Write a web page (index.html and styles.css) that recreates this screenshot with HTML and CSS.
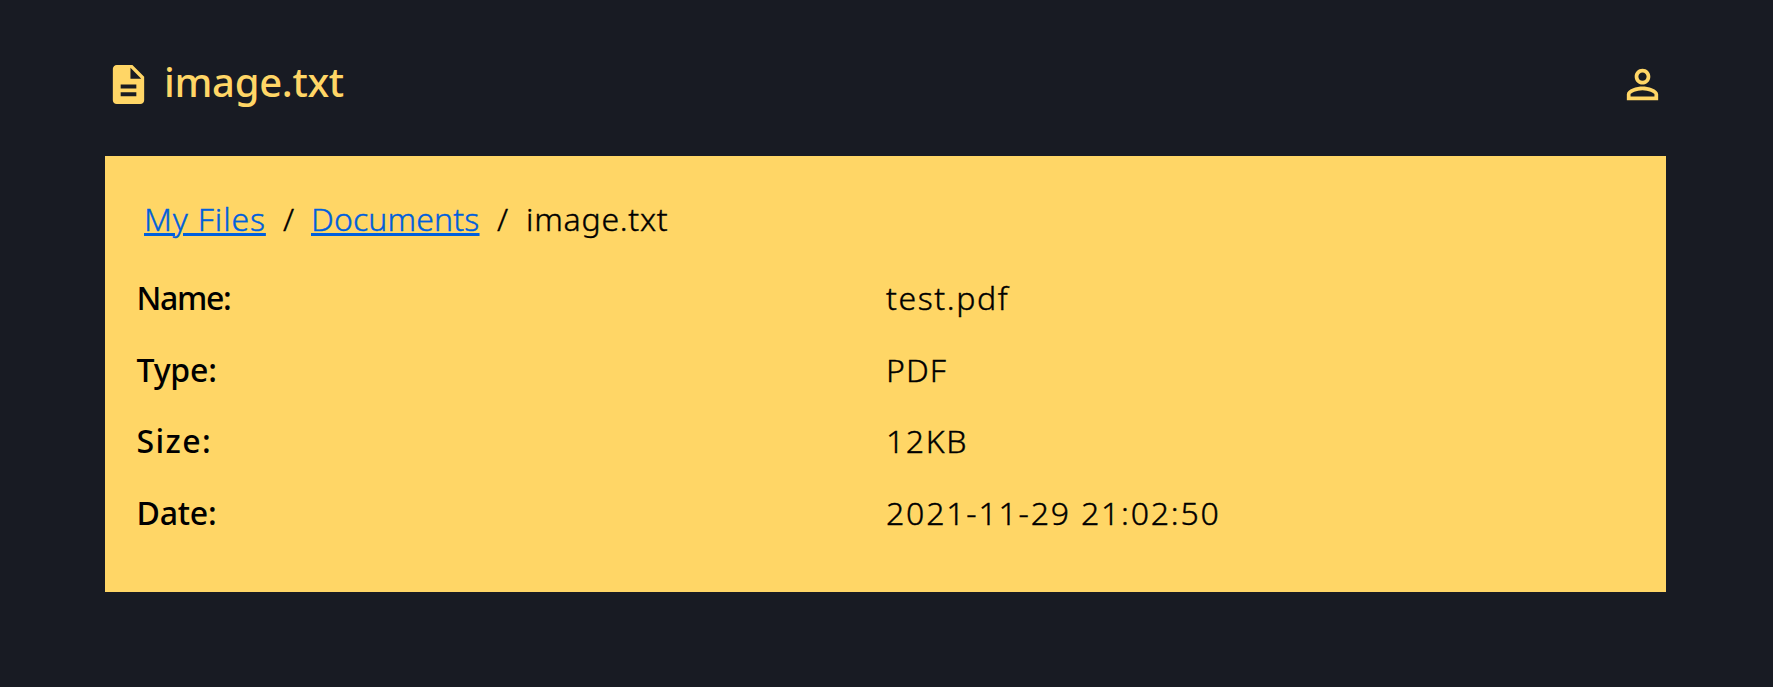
FILE: index.html
```html
<!DOCTYPE html>
<html lang="en">
<head>
<meta charset="utf-8">
<title>image.txt</title>
<link rel="stylesheet" href="styles.css">
</head>
<body>
<main class="page">
  <header class="header">
    <svg class="icon" viewBox="0 0 24 24"><path d="M14 2H6c-1.1 0-1.99.9-1.99 2L4 20c0 1.1.89 2 1.99 2H18c1.1 0 2-.9 2-2V8l-6-6zm2 16H8v-2h8v2zm0-4H8v-2h8v2zm-3-5V3.5L18.5 9H13z"/></svg>
    <h1 class="title">image.txt</h1>
    <svg class="icon" viewBox="0 0 24 24"><path d="M12 5.9c1.16 0 2.1.94 2.1 2.1s-.94 2.1-2.1 2.1S9.9 9.16 9.9 8s.94-2.1 2.1-2.1m0 9c2.97 0 6.1 1.46 6.1 2.1v1.1H5.9V17c0-.64 3.13-2.1 6.1-2.1M12 4C9.79 4 8 5.79 8 8s1.79 4 4 4 4-1.79 4-4-1.79-4-4-4zm0 9c-2.67 0-8 1.34-8 4v3h16v-3c0-2.66-5.33-4-8-4z"/></svg>
  </header>
  <section class="panel">
    <nav class="crumbs">
      <a class="crumb crumb-root" href="#">My Files</a>
      <span class="slash">/</span>
      <a class="crumb crumb-folder" href="#">Documents</a>
      <span class="slash">/</span>
      <span class="crumb-current">image.txt</span>
    </nav>
    <dl class="details">
      <dt class="label-name">Name:</dt><dd class="name">test.pdf</dd>
      <dt class="label-type">Type:</dt><dd class="type">PDF</dd>
      <dt class="label-size">Size:</dt><dd class="size">12KB</dd>
      <dt class="label-date">Date:</dt><dd class="date">2021-11-29 21:02:50</dd>
    </dl>
  </section>
</main>
</body>
</html>
```
FILE: styles.css
```css
body {
  margin: 0;
  background: #181b23;
  color: #000;
  font: 300 32px "Noto Sans", sans-serif;
}
.page { padding: 61px 107px 0 105px; }
.header {
  display: flex;
  height: 95px;
  color: #ffd666;
}
.icon {
  width: 47px;
  height: 47px;
  fill: currentColor;
}
.title {
  flex: 1;
  margin: 0 0 0 12px;
  font-size: 40px;
  font-weight: 500;
  line-height: 42px;
  letter-spacing: -0.3px;
}
.panel {
  box-sizing: border-box;
  height: 436px;
  padding: 31px 32px 0;
  background: #ffd666;
}
.crumbs {
  display: flex;
  height: 76px;
  padding-left: 7px;
  line-height: 64px;
  -webkit-text-stroke: 0.4px currentColor;
}
.crumb {
  color: #005fdd;
  text-decoration-thickness: 3px;
  text-underline-offset: 2px;
}
.crumb-root {
  width: 122px;
  letter-spacing: 0.86px;
}
.crumb-folder {
  width: 169px;
  letter-spacing: 0.15px;
}
.crumb-current {
  margin-left: 1px;
  letter-spacing: 0.75px;
}
.slash {
  width: 45px;
  text-align: center;
}
.details {
  display: grid;
  grid-template-columns: 749px 1fr;
  grid-auto-rows: 71.67px;
  margin: 0;
  line-height: 70px;
}
dt {
  margin-left: -0.5px;
  font-weight: 500;
}
dd {
  margin: 0;
  -webkit-text-stroke: 0.4px currentColor;
}
.label-name { letter-spacing: -1.3px; }
.label-type,
.label-date { letter-spacing: -0.2px; }
.label-size { letter-spacing: 1.4px; }
.name { letter-spacing: 1.6px; }
.type { letter-spacing: 1.1px; }
.size { letter-spacing: 1.6px; }
.date { letter-spacing: 1.8px; }
```
